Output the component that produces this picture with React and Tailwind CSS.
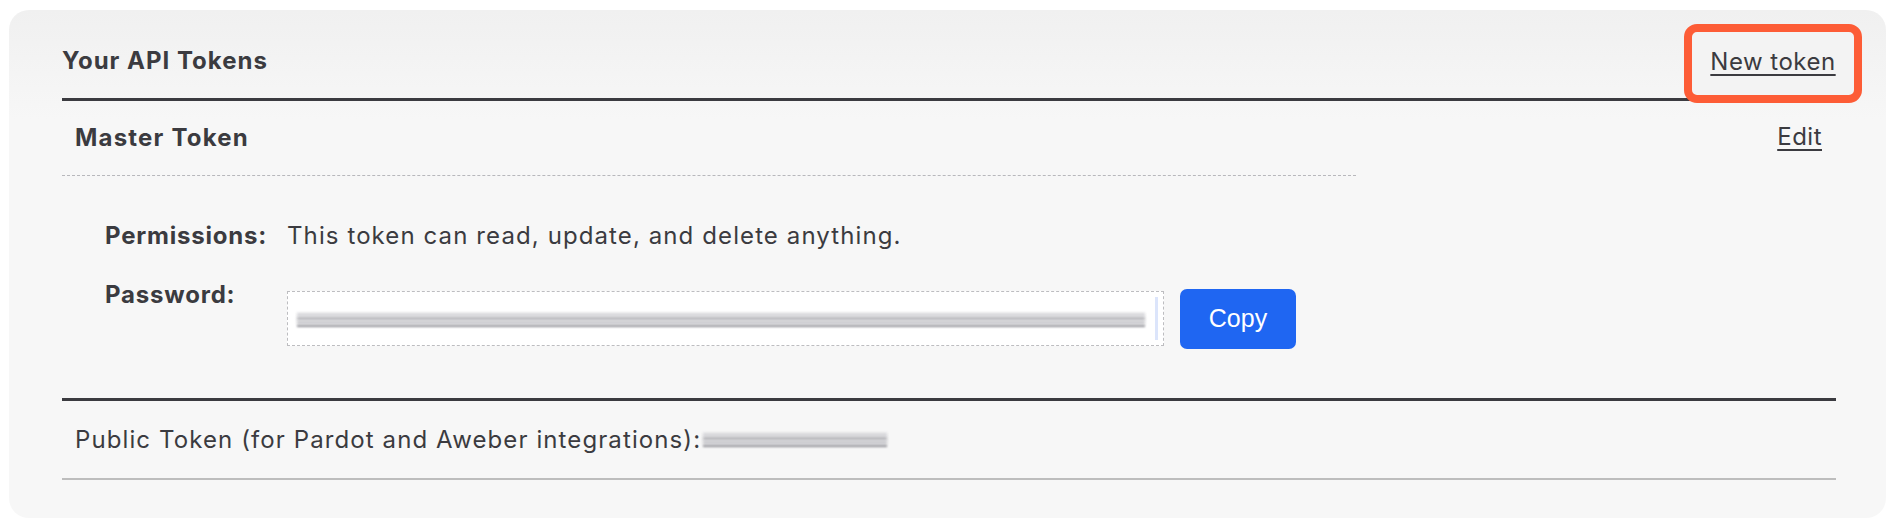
import React from "react";

function Blur({ w, className = "" }) {
  return (
    <div className={`relative h-[18px] ${className}`} style={{ width: w }}>
      <div className="absolute left-0 right-0 top-[2px] h-[3px] bg-[#cfcfd3] blur-[1.5px]" />
      <div className="absolute left-0 right-0 top-[6px] h-[3px] bg-[#a8a8ae] blur-[1.5px]" />
      <div className="absolute left-0 right-0 top-[10px] h-[3px] bg-[#bdbdc2] blur-[1.5px]" />
      <div className="absolute left-0 right-0 top-[14px] h-[2px] bg-[#909097] blur-[1px]" />
    </div>
  );
}

export default function App() {
  return (
    <div className="min-h-[527px] bg-white pt-[10px] pl-[9px] font-['Inter',sans-serif] text-[#3b3b40]">
      <div className="w-[1877px] h-[508px] rounded-[20px] bg-[linear-gradient(180deg,#f0f0f0_0px,#f7f7f7_110px)] pl-[53px] pr-[50px]">
        {/* Header */}
        <div className="relative flex items-center justify-between h-[91px] pt-[14px] border-b-[3px] border-[#3b3b40]">
          <h2 className="text-[24px] font-bold tracking-[1px]">Your API Tokens</h2>
          <div className="absolute right-[-26px] top-[14px] w-[178px] h-[79px] rounded-[13px] border-[8px] border-[#fd5c36] bg-[#f3f3f3] flex items-center justify-center">
            <a href="#" className="text-[24px] tracking-[0.5px] underline underline-offset-[4px] decoration-[2px] -mt-[3px]">New token</a>
          </div>
        </div>

        {/* Master token */}
        <div className="flex items-center">
          <div className="w-[1294px] h-[75px] flex items-center pl-[13px] border-b border-dashed border-[#b8b8bc]">
            <h3 className="text-[24px] font-bold tracking-[1.2px]">Master Token</h3>
          </div>
          <a href="#" className="ml-auto mr-[14px] -mt-[3px] text-[24px] tracking-[0.5px] underline underline-offset-[4px] decoration-[2px]">Edit</a>
        </div>

        <div className="pl-[43px] pt-[45px]">
          <div className="flex items-center h-[30px]">
            <span className="w-[182px] text-[24px] font-bold tracking-[0.8px]">Permissions:</span>
            <span className="text-[24px] tracking-[1.1px]">This token can read, update, and delete anything.</span>
          </div>
          <div className="flex items-start mt-[40px]">
            <span className="w-[182px] text-[24px] font-bold tracking-[0.8px] leading-[30px] -mt-[11px]">Password:</span>
            <div className="relative w-[877px] h-[55px] bg-white border border-dashed border-[#bdbdc0] flex items-center pl-[9px]">
              <Blur w={848} className="mt-[2px]" />
              <div className="absolute right-[5px] top-[5px] bottom-[5px] w-[3px] bg-[#dce5fb]" />
            </div>
            <button className="ml-[16px] -mt-[2px] w-[116px] h-[60px] rounded-[7px] bg-[#1f66f2] text-white text-[25px] font-['Liberation_Sans',sans-serif]">Copy</button>
          </div>
        </div>

        {/* Public token */}
        <div className="mt-[49px] border-t-[3px] border-[#3b3b40]">
          <div className="h-[79px] flex items-center pl-[13px] border-b-2 border-[#bdbdbd]">
            <span className="text-[24px] tracking-[1.1px]">Public Token (for Pardot and Aweber integrations):</span>
            <Blur w={184} className="ml-[2px]" />
          </div>
        </div>
      </div>
    </div>
  );
}
